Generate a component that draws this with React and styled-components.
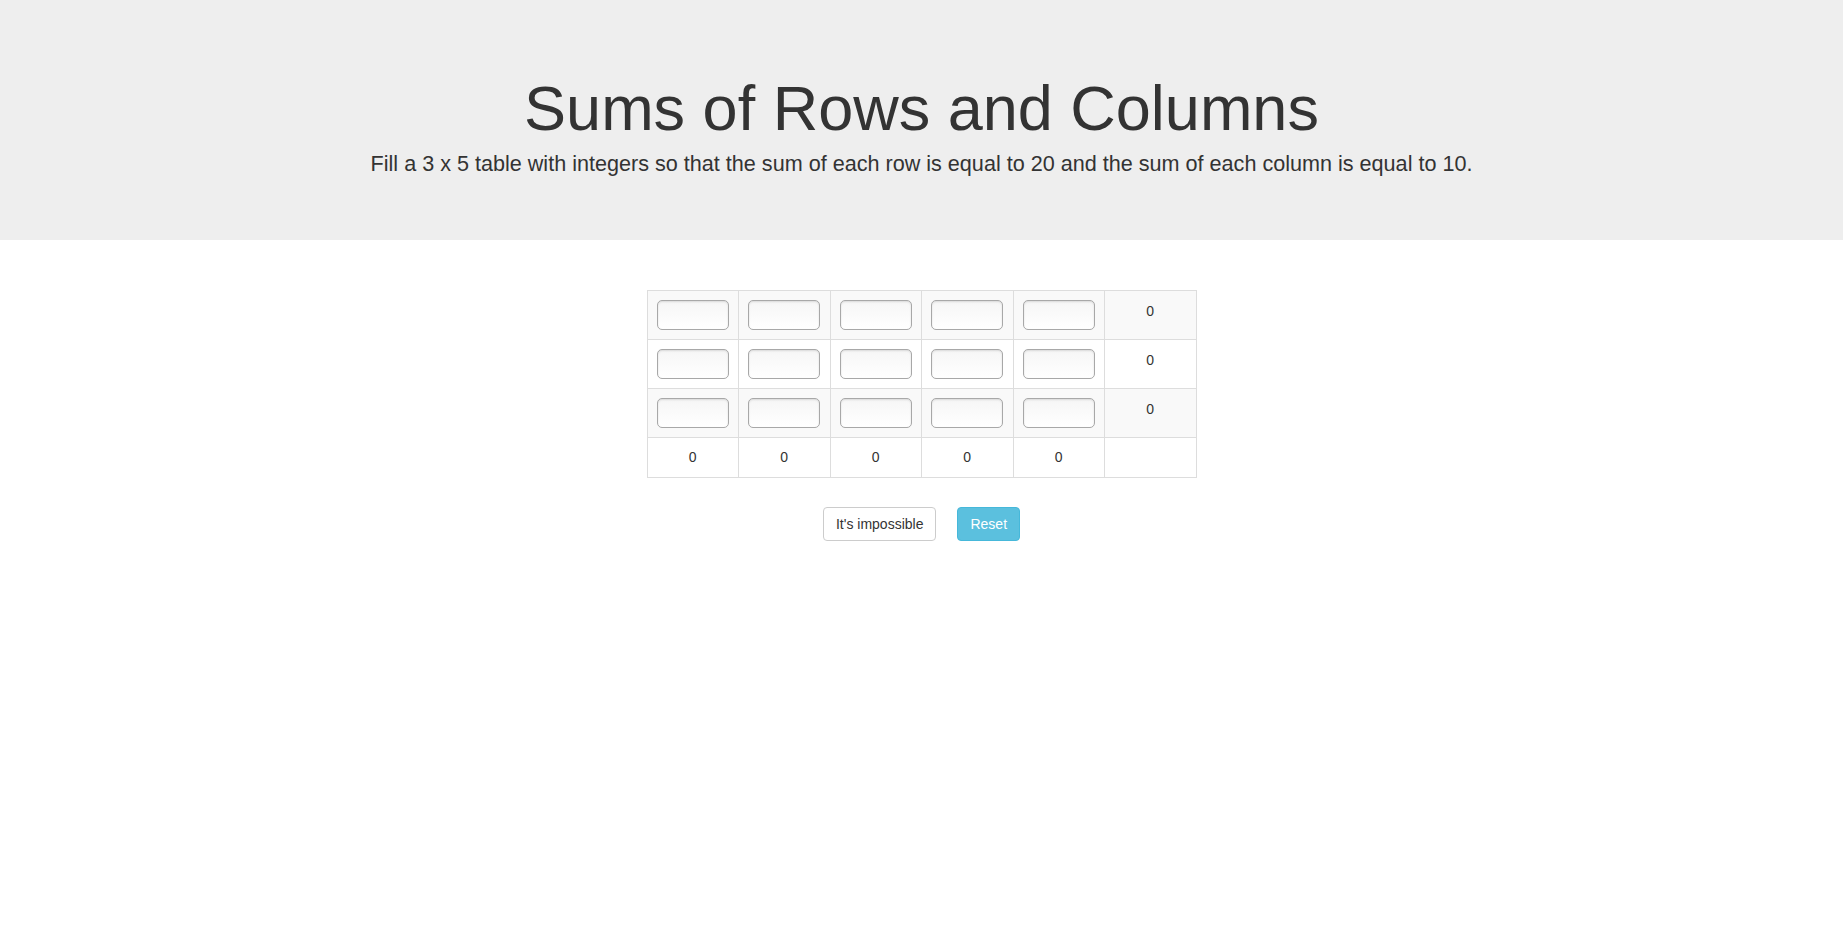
import React, {useState} from 'react'
import styled, {createGlobalStyle} from 'styled-components'

const GlobalStyle = createGlobalStyle`
  html, body {
    margin: 0;
    padding: 0;
    background: #fff;
  }
  body {
    font-family: "Liberation Sans", Arial, Helvetica, sans-serif;
    font-size: 14px;
    line-height: 1.42857;
    color: #333;
  }
  * {
    box-sizing: border-box;
  }
`

const Jumbotron = styled.header`
  background: #eee;
  height: 240px;
  padding-top: 74px;
  text-align: center;
`

const Title = styled.h1`
  margin: 0 0 6px;
  font-size: 63px;
  font-weight: 500;
  line-height: 1.1;
`

const Lead = styled.p`
  margin: 0;
  font-size: 21.6px;
  font-weight: 200;
  line-height: 30px;
`

const Main = styled.main`
  display: flex;
  flex-direction: column;
  align-items: center;
  padding-top: 50px;
`

const Grid = styled.table`
  width: 550px;
  table-layout: fixed;
  border-collapse: collapse;
  border: 1px solid #ddd;
`

const Row = styled.tr`
  background: ${p => (p.striped ? '#f9f9f9' : '#fff')};
`

const Cell = styled.td`
  border: 1px solid #ddd;
  padding: ${p => (p.total ? '9px 8px 10px' : '9px 8px')};
  text-align: center;
  vertical-align: ${p => (p.total ? 'middle' : 'top')};
  line-height: 20px;
  height: ${p => (p.total ? '40px' : '49px')};
`

const SumText = styled.span`
  display: block;
  padding-top: 1px;
`

const NumberInput = styled.input`
  display: block;
  width: 72px;
  height: 30px;
  margin: 0 auto;
  padding: 4px 6px;
  border: 1px solid #a8a8a8;
  border-radius: 5px;
  background: linear-gradient(#f6f6f6, #fff);
  box-shadow: inset 0 1px 2px rgba(0, 0, 0, 0.12);
  font: inherit;
  color: #333;
  text-align: center;
  outline: none;
`

const Actions = styled.div`
  display: flex;
  gap: 21px;
  margin-top: 29px;
`

const Button = styled.button`
  height: 34px;
  padding: 6px 12px;
  font-family: inherit;
  font-size: 14px;
  line-height: 20px;
  border-radius: 4px;
  border: 1px solid ${p => (p.info ? '#46b8da' : '#ccc')};
  background: ${p => (p.info ? '#5bc0de' : '#fff')};
  color: ${p => (p.info ? '#fff' : '#333')};
  cursor: pointer;
`

const ROWS = 3
const COLS = 5

const emptyGrid = () =>
  Array.from({length: ROWS}, () => Array.from({length: COLS}, () => ''))

const toInt = v => parseInt(v, 10) || 0

export default function App() {
  const [values, setValues] = useState(emptyGrid)

  const update = (r, c, v) =>
    setValues(prev =>
      prev.map((row, ri) => row.map((cell, ci) => (ri === r && ci === c ? v : cell)))
    )

  const rowSum = r => values[r].reduce((s, v) => s + toInt(v), 0)
  const colSum = c => values.reduce((s, row) => s + toInt(row[c]), 0)

  return (
    <>
      <GlobalStyle />
      <Jumbotron>
        <Title>Sums of Rows and Columns</Title>
        <Lead>
          Fill a 3 x 5 table with integers so that the sum of each row is equal
          to 20 and the sum of each column is equal to 10.
        </Lead>
      </Jumbotron>

      <Main>
        <Grid>
          <tbody>
            {values.map((row, r) => (
              <Row key={r} striped={r % 2 === 0}>
                {row.map((v, c) => (
                  <Cell key={c}>
                    <NumberInput
                      type="text"
                      value={v}
                      onChange={e => update(r, c, e.target.value)}
                    />
                  </Cell>
                ))}
                <Cell>
                  <SumText>{rowSum(r)}</SumText>
                </Cell>
              </Row>
            ))}
            <Row>
              {Array.from({length: COLS}, (_, c) => (
                <Cell key={c} total>
                  {colSum(c)}
                </Cell>
              ))}
              <Cell total />
            </Row>
          </tbody>
        </Grid>

        <Actions>
          <Button>It's impossible</Button>
          <Button info onClick={() => setValues(emptyGrid())}>
            Reset
          </Button>
        </Actions>
      </Main>
    </>
  )
}
